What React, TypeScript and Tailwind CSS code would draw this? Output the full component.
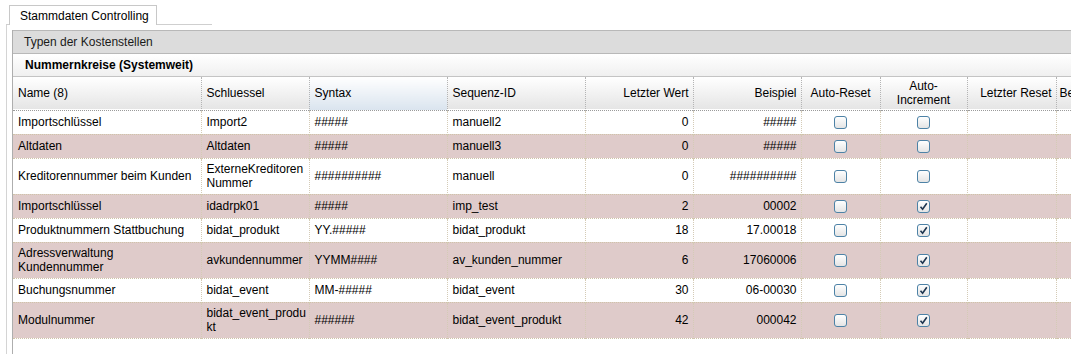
import React from 'react';

type Row = {
  name: string;
  key: string;
  syntax: string;
  seq: string;
  last: string;
  example: string;
  autoReset: boolean;
  autoInc: boolean;
  tall?: boolean;
};

const rows: Row[] = [
  { name: 'Importschlüssel', key: 'Import2', syntax: '#####', seq: 'manuell2', last: '0', example: '#####', autoReset: false, autoInc: false },
  { name: 'Altdaten', key: 'Altdaten', syntax: '#####', seq: 'manuell3', last: '0', example: '#####', autoReset: false, autoInc: false },
  { name: 'Kreditorennummer beim Kunden', key: 'ExterneKreditoren\nNummer', syntax: '##########', seq: 'manuell', last: '0', example: '##########', autoReset: false, autoInc: false, tall: true },
  { name: 'Importschlüssel', key: 'idadrpk01', syntax: '#####', seq: 'imp_test', last: '2', example: '00002', autoReset: false, autoInc: true },
  { name: 'Produktnummern Stattbuchung', key: 'bidat_produkt', syntax: 'YY.#####', seq: 'bidat_produkt', last: '18', example: '17.00018', autoReset: false, autoInc: true },
  { name: 'Adressverwaltung\nKundennummer', key: 'avkundennummer', syntax: 'YYMM####', seq: 'av_kunden_nummer', last: '6', example: '17060006', autoReset: false, autoInc: true, tall: true },
  { name: 'Buchungsnummer', key: 'bidat_event', syntax: 'MM-#####', seq: 'bidat_event', last: '30', example: '06-00030', autoReset: false, autoInc: true },
  { name: 'Modulnummer', key: 'bidat_event_produ\nkt', syntax: '######', seq: 'bidat_event_produkt', last: '42', example: '000042', autoReset: false, autoInc: true, tall: true },
];

function Checkbox({ checked }: { checked: boolean }) {
  return (
    <span className="inline-flex h-[13px] w-[13px] items-center justify-center rounded-[3px] border border-[#4d82a6] bg-gradient-to-b from-white to-[#e4e4e4] align-middle">
      {checked && (
        <svg width="9" height="9" viewBox="0 0 9 9">
          <path d="M1.5 4.8 L3.6 7.2 L7.8 1.2" fill="none" stroke="#1d3550" strokeWidth="1.6" />
        </svg>
      )}
    </span>
  );
}

const th = 'border-r border-dotted border-r-[#b4b4b4] px-[5px] font-normal align-middle';
const td = 'border-r border-dotted border-r-[#d4cbb6] px-[5px] align-middle whitespace-pre-line';

export default function App() {
  return (
    <div className="h-[354px] w-[1071px] overflow-hidden bg-white font-['Liberation_Sans',Arial,sans-serif] text-[12px] leading-[14px] text-black">
      <div className="pl-[6px] pt-[5px]">
        <div className="flex items-end">
          <div className="h-[20px] w-[3px] border-b border-[#cfcfcf]" />
          <div className="flex h-[20px] w-[148px] items-center border border-b-0 border-[#c8c8c8] bg-white pl-[10px]">
            Stammdaten Controlling
          </div>
          <div className="h-[20px] w-[55px] border-b border-[#cfcfcf]" />
        </div>
        <div className="h-[329px] border-l border-[#d4d4d4] pl-[5px] pt-[5px]">
          <div className="h-full border-l border-[#aeaeae]">
            <div className="flex h-[24px] items-center border-y border-[#b8b8b8] bg-[#dcdcdc] pl-[11px] text-[#1a1a1a]">
              Typen der Kostenstellen
            </div>
            <div className="flex h-[23px] items-center border-b border-[#c4c4c4] bg-gradient-to-b from-white to-[#f0f0f0] pl-[12px] font-bold">
              Nummernkreise (Systemweit)
            </div>
            <table className="w-[1200px] table-fixed border-collapse">
              <colgroup>
                <col className="w-[188px]" />
                <col className="w-[108px]" />
                <col className="w-[138px]" />
                <col className="w-[138px]" />
                <col className="w-[108px]" />
                <col className="w-[108px]" />
                <col className="w-[79px]" />
                <col className="w-[87px]" />
                <col className="w-[89px]" />
                <col className="w-[157px]" />
              </colgroup>
              <thead>
                <tr className="h-[33px] border-b border-dotted border-b-[#9a9a9a] bg-gradient-to-b from-white to-[#e5e5e5]">
                  <th className={`${th} text-left`}>Name (8)</th>
                  <th className={`${th} text-left`}>Schluessel</th>
                  <th className={`${th} bg-gradient-to-b from-white to-[#dae4ee] text-left`}>Syntax</th>
                  <th className={`${th} text-left`}>Sequenz-ID</th>
                  <th className={`${th} !pr-[4px] text-right`}>Letzter Wert</th>
                  <th className={`${th} !pr-[4px] text-right`}>Beispiel</th>
                  <th className={`${th} text-center`}>Auto-Reset</th>
                  <th className={`${th} text-center`}>
                    Auto-
                    <br />
                    Increment
                  </th>
                  <th className={`${th} !pr-[4px] text-right`}>Letzter Reset</th>
                  <th className={`${th} text-left !pl-[3px]`}>Bemerkung</th>
                </tr>
              </thead>
              <tbody>
                {rows.map((r, i) => (
                  <tr
                    key={i}
                    className={`${r.tall ? 'h-[36px]' : 'h-[24px]'} border-b border-dotted border-b-[#cfc4a8] ${i % 2 === 1 ? 'bg-[#dfcbca]' : 'bg-white'}`}
                  >
                    <td className={td}>{r.name}</td>
                    <td className={td}>{r.key}</td>
                    <td className={td}>{r.syntax}</td>
                    <td className={td}>{r.seq}</td>
                    <td className={`${td} !pr-[4px] text-right`}>{r.last}</td>
                    <td className={`${td} !pr-[4px] text-right`}>{r.example}</td>
                    <td className={`${td} text-center`}>
                      <Checkbox checked={r.autoReset} />
                    </td>
                    <td className={`${td} text-center`}>
                      <Checkbox checked={r.autoInc} />
                    </td>
                    <td className={td} />
                    <td className={td} />
                  </tr>
                ))}
              </tbody>
            </table>
          </div>
        </div>
      </div>
    </div>
  );
}
